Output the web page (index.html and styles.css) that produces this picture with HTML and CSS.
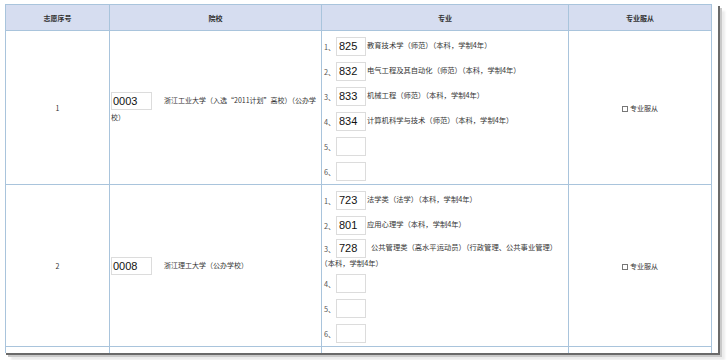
FILE: index.html
```html
<!DOCTYPE html>
<html lang="zh-CN">
<head>
<meta charset="utf-8">
<title>志愿</title>
<link rel="stylesheet" href="styles.css">
</head>
<body>
<div class="frame">
<table class="tbl">
  <colgroup><col class="c1"><col class="c2"><col class="c3"><col class="c4"></colgroup>
  <thead>
    <tr><th>志愿序号</th><th>院校</th><th>专业</th><th>专业服从</th></tr>
  </thead>
  <tbody>
    <tr class="r1">
      <td class="num">1</td>
      <td class="school"><span class="inp big">0003</span><span class="gap"></span>浙江工业大学（入选“2011计划”高校）（公办学校）</td>
      <td class="majors">
        <div class="item"><span class="lbl">1、</span><span class="inp">825</span>教育技术学（师范）（本科，学制4年）</div>
        <div class="item"><span class="lbl">2、</span><span class="inp">832</span>电气工程及其自动化（师范）（本科，学制4年）</div>
        <div class="item"><span class="lbl">3、</span><span class="inp">833</span>机械工程（师范）（本科，学制4年）</div>
        <div class="item"><span class="lbl">4、</span><span class="inp">834</span>计算机科学与技术（师范）（本科，学制4年）</div>
        <div class="item"><span class="lbl">5、</span><span class="inp"></span></div>
        <div class="item"><span class="lbl">6、</span><span class="inp"></span></div>
      </td>
      <td class="obey"><span class="chk"></span>专业服从</td>
    </tr>
    <tr class="r2">
      <td class="num">2</td>
      <td class="school"><span class="inp big">0008</span><span class="gap"></span>浙江理工大学（公办学校）</td>
      <td class="majors">
        <div class="item"><span class="lbl">1、</span><span class="inp">723</span>法学类（法学）（本科，学制4年）</div>
        <div class="item"><span class="lbl">2、</span><span class="inp">801</span>应用心理学（本科，学制4年）</div>
        <div class="item wrap"><span class="lbl">3、</span><span class="inp">728</span><span class="sp"></span>公共管理类（高水平运动员）（行政管理、公共事业管理）<span class="nw">（本科，学制4年）</span></div>
        <div class="item"><span class="lbl">4、</span><span class="inp"></span></div>
        <div class="item"><span class="lbl">5、</span><span class="inp"></span></div>
        <div class="item"><span class="lbl">6、</span><span class="inp"></span></div>
      </td>
      <td class="obey"><span class="chk"></span>专业服从</td>
    </tr>
    <tr class="r3">
      <td></td>
      <td></td>
      <td class="majors">
        <div class="item"><span class="lbl"></span><span class="inp ghost"></span></div>
      </td>
      <td></td>
    </tr>
  </tbody>
</table>
</div>
</body>
</html>
```
FILE: styles.css
```css
html, body {
  margin: 0;
  padding: 0;
  background: #ffffff;
}
body {
  width: 727px;
  height: 360px;
  overflow: hidden;
  font-family: "Noto Sans CJK SC", "Liberation Sans", sans-serif;
  color: #333;
}
.frame {
  margin: 4px 0 0 4px;
  width: 714px;
  height: 349px;
  overflow: hidden;
  background: #fff;
  box-shadow: 2px 2px 0 #6a6a6a, 4px 4px 0 #c9c9c9, 7px 7px 2px #ececec;
}
.tbl {
  margin-left: 1px;
  border-collapse: collapse;
  table-layout: fixed;
  width: 707px;
  font-size: 7px;
}
.c1 { width: 104px; }
.c2 { width: 212px; }
.c3 { width: 247px; }
.c4 { width: 143px; }
.tbl th, .tbl td {
  border: 1px solid #a9c4dc;
  padding: 0;
}
.tbl th {
  height: 25px;
  background: #d6ddf0;
  font-weight: bold;
  color: #333;
  text-align: center;
  vertical-align: middle;
}
.tbl td {
  vertical-align: middle;
}
.r3 td { height: 30px; vertical-align: top; }
.num { text-align: center; }
.school {
  line-height: 14px;
  padding-left: 1px !important;
}
.majors {
  padding: 3px 0 0 2px !important;
  line-height: 10px;
  font-size: 7.3px;
}
.item {
  padding: 3px 0;
  color: #333;
}
.item.wrap {
  padding-top: 1px;
}
.nw {
  white-space: nowrap;
}
.lbl {
  display: inline-block;
  width: 12px;
  color: #555;
  vertical-align: middle;
}
.sp {
  display: inline-block;
  width: 4px;
}
.inp {
  display: inline-block;
  box-sizing: border-box;
  width: 30px;
  height: 19px;
  border: 1px solid #dcdcdc;
  font-family: "Liberation Sans", sans-serif;
  font-size: 11px;
  line-height: 17px;
  padding-left: 2px;
  color: #111;
  vertical-align: middle;
  margin-right: 1px;
  background: #fff;
}
.inp.ghost {
  margin-top: 1px;
  border-color: #e4e4e4;
}
.inp.big {
  width: 41px;
  height: 18px;
  line-height: 16px;
  padding-left: 1px;
}
.gap {
  display: inline-block;
  width: 11px;
}
.obey {
  text-align: center;
  color: #333;
}
.chk {
  display: inline-block;
  box-sizing: border-box;
  width: 6px;
  height: 6px;
  border: 1px solid #777;
  margin-right: 2px;
  vertical-align: -1px;
}
```
